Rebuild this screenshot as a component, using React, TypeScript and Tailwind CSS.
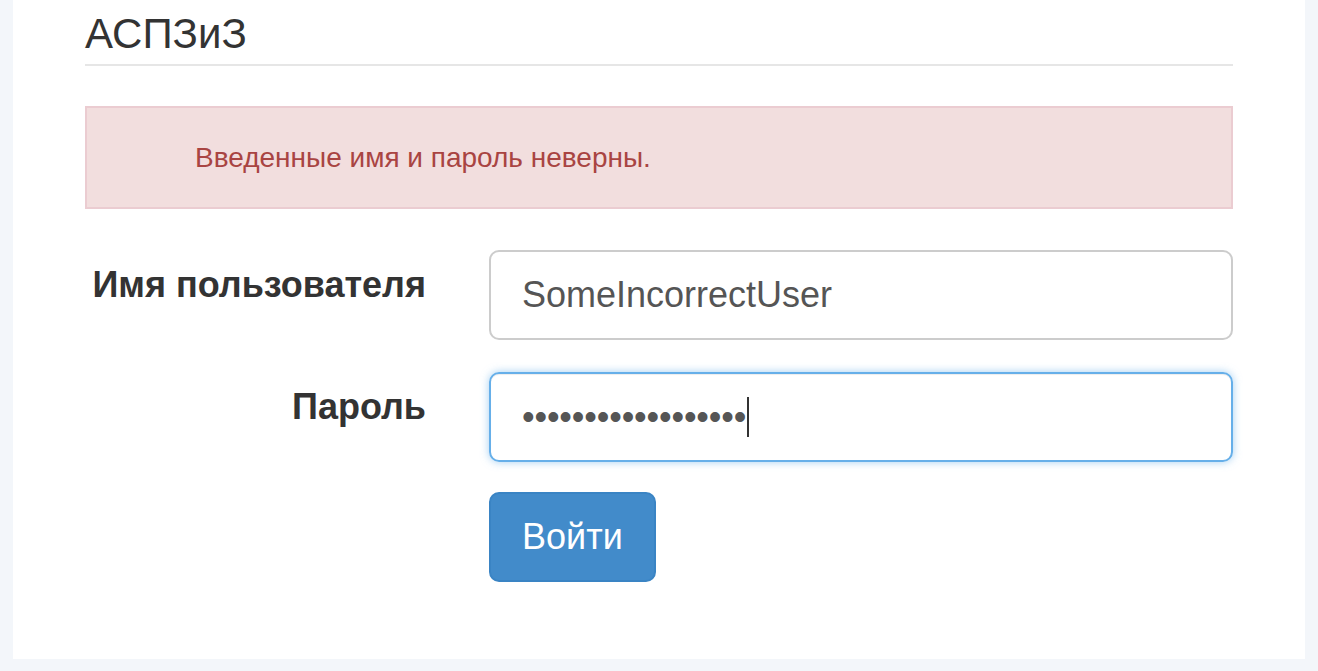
import React from 'react';

const font = { fontFamily: '"Liberation Sans", Arial, sans-serif' };

const App: React.FC = () => {
  return (
    <div className="min-h-screen bg-[#f3f6fa] px-[13px]" style={font}>
      <div className="bg-white h-[659px] px-[72px]">
        {/* Header */}
        <div className="pt-[11px] pb-[7px] border-b-2 border-[#e6e6e6]">
          <h1 className="text-[42px] leading-[46px] text-[#333] font-normal">АСПЗиЗ</h1>
        </div>

        {/* Validation summary */}
        <div className="mt-[40px] border-2 border-[#ebccd1] bg-[#f2dede] pl-[108px] pt-[30px] pb-[29px]">
          <ul>
            <li className="text-[28px] leading-[40px] text-[#a94442]">Введенные имя и пароль неверны.</li>
          </ul>
        </div>

        {/* Login form */}
        <form className="mt-[41px] grid grid-cols-[341px_1fr] gap-x-[63px] gap-y-[32px]">
          <label className="text-right font-bold text-[36px] leading-[40px] text-[#333] pt-[15px]">
            Имя пользователя
          </label>
          <div className="h-[90px] flex items-center border-2 border-[#cccccc] rounded-[10px] pl-[31px] text-[36px] text-[#555]">
            SomeIncorrectUser
          </div>

          <label className="text-right font-bold text-[36px] leading-[40px] text-[#333] pt-[15px]">
            Пароль
          </label>
          <div className="h-[90px] flex items-center border-2 border-[#66afe9] rounded-[10px] pl-[31px] text-[36px] text-[#555] shadow-[inset_0_1px_1px_rgba(0,0,0,0.075),0_0_8px_rgba(102,175,233,0.6)]">
            <span className="tracking-[-0.15px]">••••••••••••••••••</span>
            <span className="w-[2px] h-[40px] bg-[#333] ml-[1px]" />
          </div>

          <div />
          <div className="-mt-[2px]">
            <button
              type="button"
              className="h-[90px] px-[31px] rounded-[10px] border-2 border-[#3a84c4] bg-[#428bca] text-white text-[36px] leading-[40px]"
            >
              Войти
            </button>
          </div>
        </form>
      </div>
    </div>
  );
};

export default App;
